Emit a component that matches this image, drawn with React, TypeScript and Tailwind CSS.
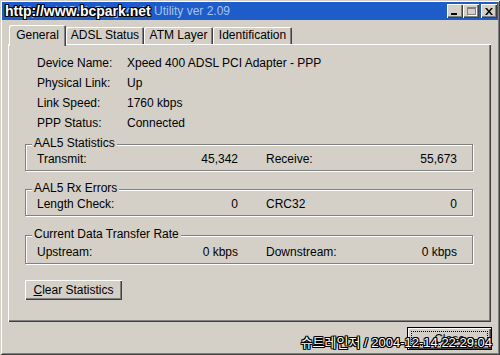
import React from 'react';

const outline =
  '[text-shadow:1px_0_0_#000,-1px_0_0_#000,0_1px_0_#000,0_-1px_0_#000,1px_1px_0_#000,-1px_-1px_0_#000,1px_-1px_0_#000,-1px_1px_0_#000]';

function CaptionButton({ children }: { children: React.ReactNode }) {
  return (
    <div className="relative flex h-[14px] w-[16px] items-center justify-center bg-[#d4d0c8] shadow-[inset_1px_1px_#fff,inset_-1px_-1px_#404040,inset_-2px_-2px_#808080]">
      {children}
    </div>
  );
}

function Row({ l1, v1, l2, v2, extra = '' }: { l1: string; v1: string; l2: string; v2: string; extra?: string }) {
  return (
    <div className={`flex h-[18px] items-center pl-[11px] pr-[15px] ${extra}`}>
      <div className="flex w-[201px] justify-between">
        <span>{l1}</span>
        <span>{v1}</span>
      </div>
      <div className="ml-[28px] flex flex-1 justify-between">
        <span>{l2}</span>
        <span>{v2}</span>
      </div>
    </div>
  );
}

function Group({ title, children, className = '' }: { title: string; children: React.ReactNode; className?: string }) {
  return (
    <div
      className={`ml-[17px] mr-[18px] border border-[#808080] pb-[2px] shadow-[inset_1px_1px_#fff,1px_1px_#fff] ${className}`}
    >
      <div className="-mt-[9px] ml-[6px] w-fit bg-[#d4d0c8] px-[2px] leading-[14px]">{title}</div>
      {children}
    </div>
  );
}

export default function App() {
  const info = [
    ['Device Name:', 'Xpeed 400 ADSL PCI Adapter - PPP'],
    ['Physical Link:', 'Up'],
    ['Link Speed:', '1760 kbps'],
    ['PPP Status:', 'Connected'],
  ];

  return (
    <div className="relative h-[355px] w-[500px] overflow-hidden bg-[#d4d0c8] p-[2px] font-['Liberation_Sans',Arial,sans-serif] text-[12px] text-black shadow-[inset_1px_1px_#d4d0c8,inset_-1px_-1px_#404040,inset_2px_2px_#fff,inset_-2px_-2px_#808080]">
      {/* title bar */}
      <div className="flex h-[18px] items-center bg-[#1d5cc9] pl-[21px] pr-[1px]">
        <span className="flex-1 leading-none text-[#a9c3ea]">Xpeed ADSL Diagnostic Utility ver 2.09</span>
        <CaptionButton>
          <div className="mt-[5px] ml-[-2px] h-[2px] w-[6px] bg-black" />
        </CaptionButton>
        <CaptionButton>
          <div className="h-[8px] w-[9px] border border-t-2 border-[#808080] shadow-[1px_1px_#fff]" />
        </CaptionButton>
        <div className="ml-[2px]">
          <CaptionButton>
            <svg width="8" height="7" viewBox="0 0 8 7">
              <path d="M0 0h2l2 2.5L6 0h2L5 3.5 8 7H6L4 4.5 2 7H0l3-3.5z" fill="#000" />
            </svg>
          </CaptionButton>
        </div>
      </div>

      {/* tabs */}
      <div className="mt-[5px] flex h-[19px] items-end pl-[7px]">
        <div className="relative z-10 -mb-[2px] flex h-[21px] w-[57px] justify-center rounded-t-[2px] bg-[#d4d0c8] pt-[3px] leading-[14px] shadow-[inset_1px_1px_#fff,inset_-1px_0_#404040,inset_-2px_0_#808080]">
          General
        </div>
        <div className="flex h-[17px] w-[78px] justify-center rounded-t-[2px] pt-[1px] leading-[14px] shadow-[inset_1px_1px_#fff,inset_-1px_0_#404040,inset_-2px_0_#808080]">
          ADSL Status
        </div>
        <div className="flex h-[17px] w-[69px] justify-center rounded-t-[2px] pt-[1px] leading-[14px] shadow-[inset_1px_1px_#fff,inset_-1px_0_#404040,inset_-2px_0_#808080]">
          ATM Layer
        </div>
        <div className="flex h-[17px] w-[79px] justify-center rounded-t-[2px] pt-[1px] leading-[14px] shadow-[inset_1px_1px_#fff,inset_-1px_0_#404040,inset_-2px_0_#808080]">
          Identification
        </div>
      </div>

      {/* tab panel */}
      <div className="ml-[6px] mr-[7px] h-[278px] pt-[9px] shadow-[inset_1px_1px_#fff,inset_-1px_-1px_#404040,inset_-2px_-2px_#808080]">
        <div className="grid grid-cols-[90px_1fr] pl-[29px] leading-[20px]">
          {info.map(([k, v]) => (
            <React.Fragment key={k}>
              <span>{k}</span>
              <span>{v}</span>
            </React.Fragment>
          ))}
        </div>

        <Group title="AAL5 Statistics" className="mt-[11px]">
          <Row l1="Transmit:" v1="45,342" l2="Receive:" v2="55,673" />
        </Group>
        <Group title="AAL5 Rx Errors" className="mt-[18px]">
          <Row l1="Length Check:" v1="0" l2="CRC32" v2="0" />
        </Group>
        <Group title="Current Data Transfer Rate" className="mt-[19px]">
          <Row l1="Upstream:" v1="0 kbps" l2="Downstream:" v2="0 kbps" extra="mt-[2px]" />
        </Group>

        <button
          type="button"
          className="ml-[17px] mt-[16px] h-[20px] w-[97px] bg-[#d4d0c8] leading-[14px] shadow-[inset_1px_1px_#fff,inset_-1px_-1px_#404040,inset_-2px_-2px_#808080]"
        >
          <span className="underline">C</span>lear Statistics
        </button>
      </div>

      {/* close */}
      <div className="mt-[5px] flex justify-end pr-[6px]">
        <button
          type="button"
          className="h-[23px] w-[85px] border border-black bg-[#d4d0c8] p-[3px] shadow-[inset_1px_1px_#fff,inset_-1px_-1px_#404040,inset_-2px_-2px_#808080]"
        >
          <div className="flex h-full items-center justify-center border border-dotted border-black leading-[14px]">
            Close
          </div>
        </button>
      </div>

      {/* watermarks */}
      <div className={`absolute left-[5px] top-[3px] text-[14px] font-bold leading-[16px] text-white ${outline}`}>
        http://www.bcpark.net
      </div>
      <div
        className={`absolute bottom-[5px] right-[8px] font-['Liberation_Sans','Noto_Sans_CJK_KR',sans-serif] text-[13px] leading-[15px] text-white ${outline}`}
      >
        슈트레인저 / 2004-12-14 22:29:04
      </div>
    </div>
  );
}
